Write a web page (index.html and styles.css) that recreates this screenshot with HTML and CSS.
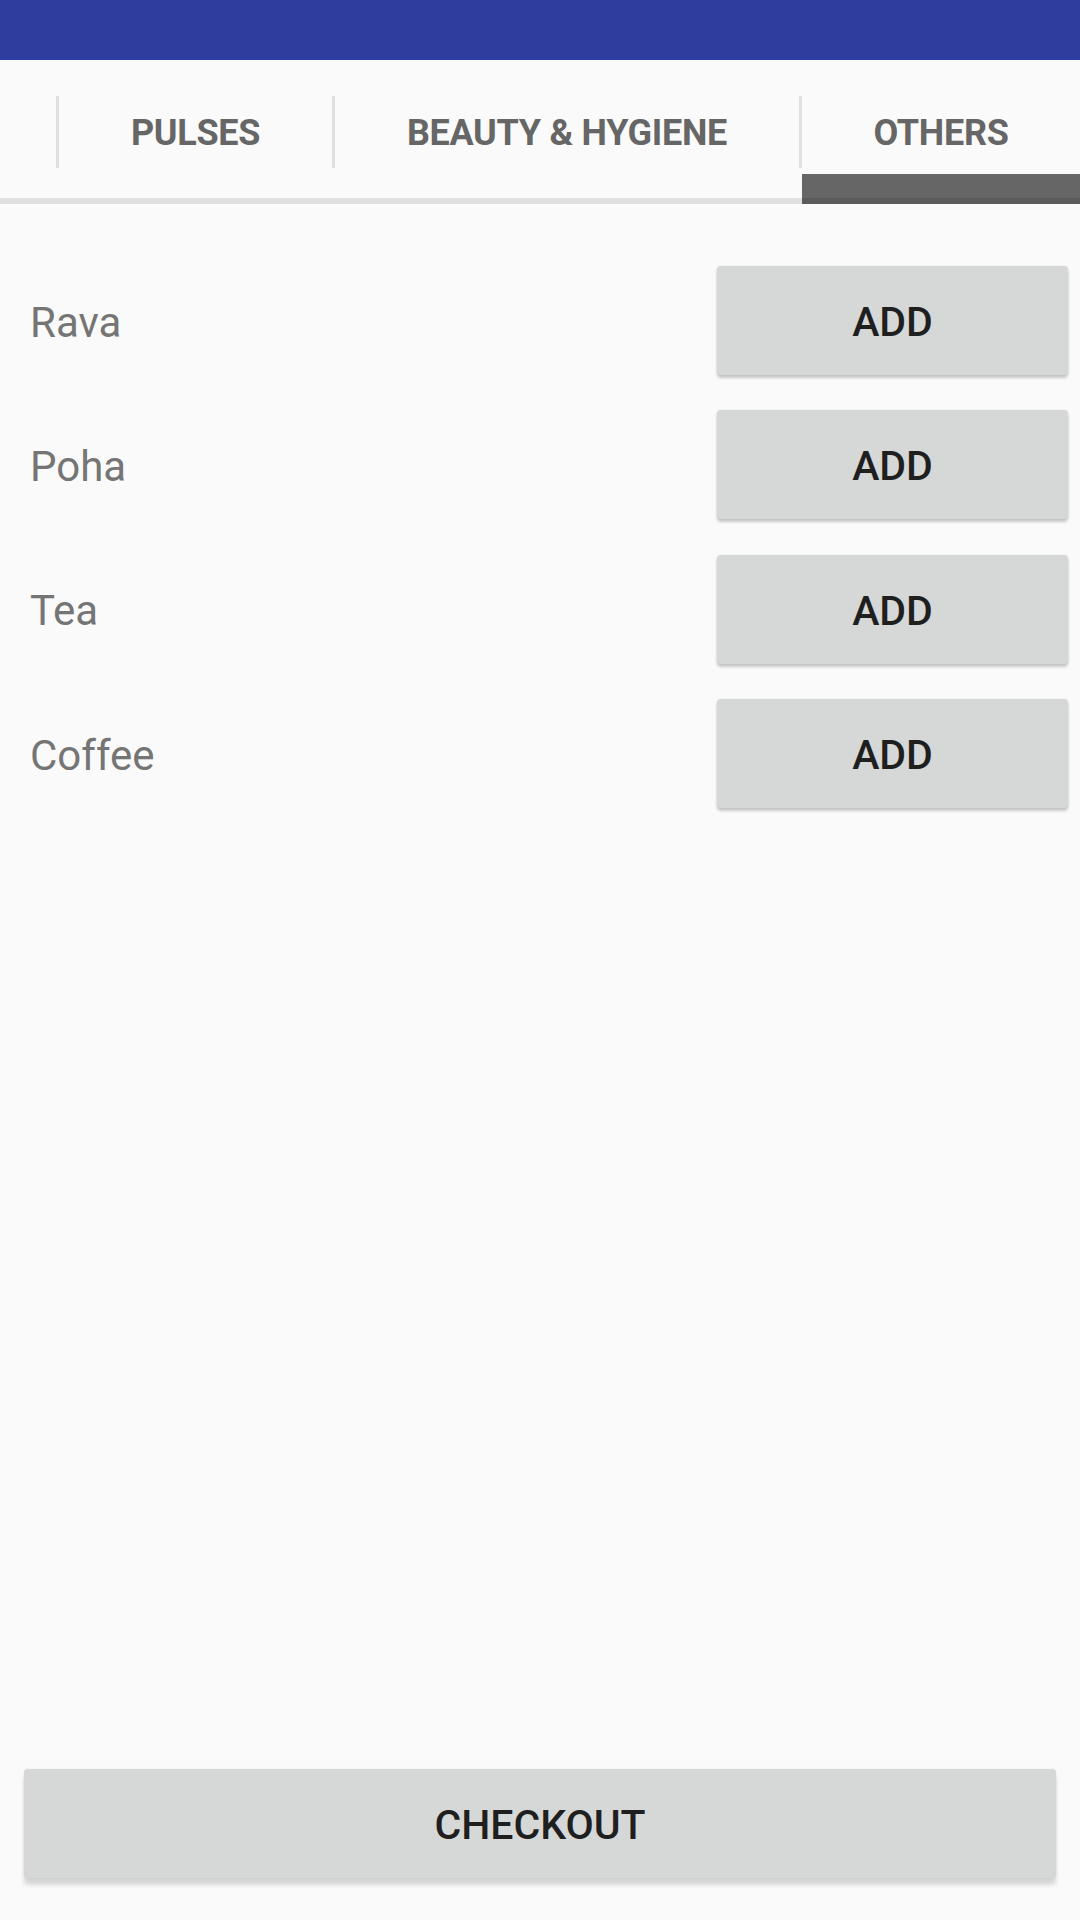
FILE: index.html
```html
<!DOCTYPE html>
<html>
<head>
<meta charset="utf-8">
<link rel="stylesheet" href="styles.css">
</head>
<body>
<div class="app">
  <div class="statusbar"></div>
  <div class="tabs">
    <div class="tab tab-cut"></div>
    <div class="divider"></div>
    <div class="tab tab-pulses">PULSES</div>
    <div class="divider"></div>
    <div class="tab tab-beauty">BEAUTY &amp; HYGIENE</div>
    <div class="divider"></div>
    <div class="tab tab-others active">OTHERS</div>
  </div>
  <div class="list">
    <div class="row"><span class="label">Rava</span><button class="btn add">ADD</button></div>
    <div class="row"><span class="label">Poha</span><button class="btn add">ADD</button></div>
    <div class="row"><span class="label">Tea</span><button class="btn add">ADD</button></div>
    <div class="row"><span class="label">Coffee</span><button class="btn add">ADD</button></div>
  </div>
  <div class="footer">
    <button class="btn checkout">CHECKOUT</button>
  </div>
</div>
</body>
</html>
```
FILE: styles.css
```css
* { box-sizing: border-box; }
html, body {
  margin: 0;
  padding: 0;
  background: #fafafa;
  font-family: Roboto, "Liberation Sans", sans-serif;
}
.app {
  width: 1080px;
  height: 1920px;
  display: flex;
  flex-direction: column;
  background: #fafafa;
}
.statusbar {
  height: 60px;
  background: #2f3e9e;
  flex: none;
}
.tabs {
  height: 144px;
  flex: none;
  display: flex;
  align-items: center;
  border-bottom: 6px solid #e0e0e0;
  position: relative;
}
.tab {
  height: 138px;
  padding-top: 8px;
  display: flex;
  align-items: center;
  justify-content: center;
  font-size: 36px;
  font-weight: 700;
  color: #666666;
  letter-spacing: -0.3px;
  position: relative;
}
.tab-cut { width: 56px; }
.tab-pulses { width: 273px; }
.tab-beauty { width: 464px; }
.tab-others { flex: 1; }
.tab.active::after {
  content: "";
  position: absolute;
  left: 0;
  right: 0;
  bottom: -6px;
  height: 24px;
  background: #666666;
  border-bottom: 6px solid #5b5b5b;
}
.divider {
  width: 3px;
  height: 72px;
  margin-top: 6px;
  background: #e0e0e0;
  flex: none;
}
.list {
  flex: 1;
  padding: 62px 12px 0 0;
  display: flex;
  flex-direction: column;
  gap: 35.4px;
}
.row {
  height: 109px;
  display: flex;
  align-items: center;
  justify-content: space-between;
}
.label {
  padding-left: 30px;
  padding-top: 3px;
  font-size: 42px;
  color: #757575;
}
.btn {
  border: none;
  background: #d6d7d7;
  border-radius: 4px;
  font-family: Roboto, "Liberation Sans", sans-serif;
  font-weight: 500;
  font-size: 41px;
  color: #1f1f1f;
  box-shadow: 0 3px 3px rgba(0,0,0,0.2), 0 0 2px rgba(0,0,0,0.1);
  padding: 3px 0 0 0;
}
.add {
  width: 351px;
  height: 109px;
}
.footer {
  flex: none;
  padding: 0 24px 42px 24px;
}
.checkout {
  width: 100%;
  height: 109px;
  box-shadow: 0 7px 4px rgba(0,0,0,0.14), 0 0 2px rgba(0,0,0,0.1);
}
```
